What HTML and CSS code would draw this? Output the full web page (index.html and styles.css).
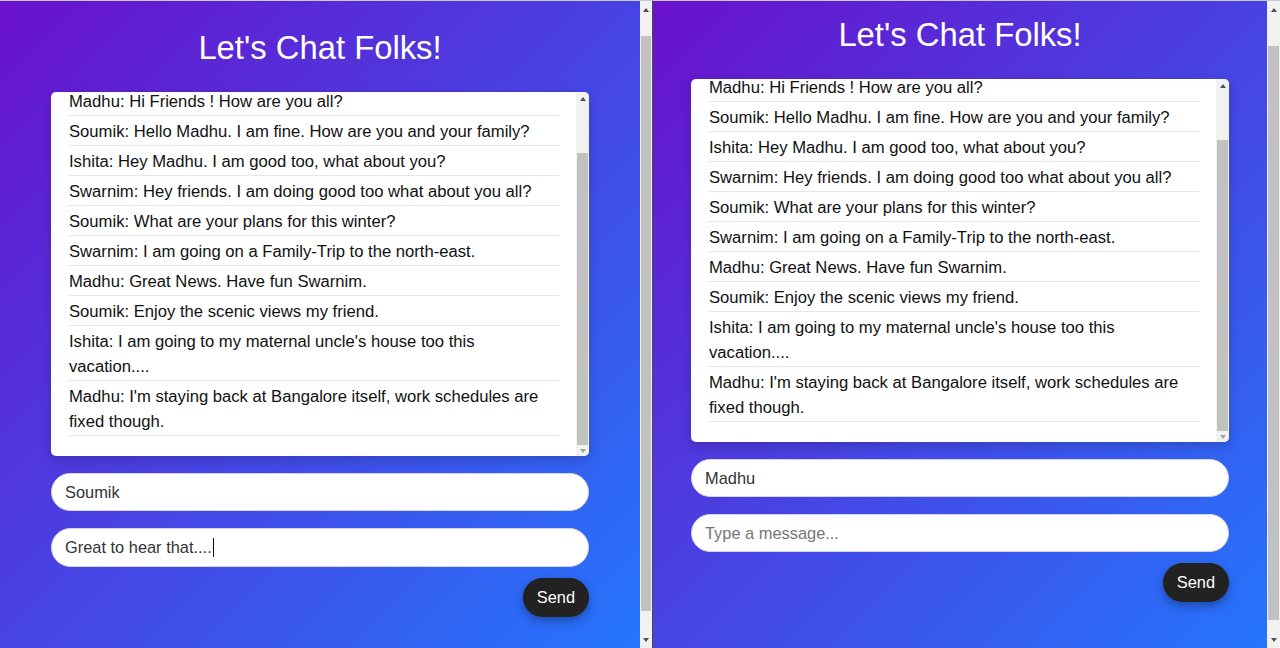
FILE: index.html
```html
<!DOCTYPE html>
<html lang="en">
<head>
<meta charset="utf-8">
<title>Let's Chat Folks!</title>
<link rel="stylesheet" href="styles.css">
</head>
<body>
<div class="desktop">
  <section class="window window-left">
    <div class="viewport">
      <main class="app">
        <h1 class="title">Let's Chat Folks!</h1>
        <div class="chat-box">
          <div class="messages">
            <ul class="message-list">
              <li>Madhu: Hi Friends ! How are you all?</li>
              <li>Soumik: Hello Madhu. I am fine. How are you and your family?</li>
              <li>Ishita: Hey Madhu. I am good too, what about you?</li>
              <li>Swarnim: Hey friends. I am doing good too what about you all?</li>
              <li>Soumik: What are your plans for this winter?</li>
              <li>Swarnim: I am going on a Family-Trip to the north-east.</li>
              <li>Madhu: Great News. Have fun Swarnim.</li>
              <li>Soumik: Enjoy the scenic views my friend.</li>
              <li>Ishita: I am going to my maternal uncle's house too this vacation....</li>
              <li>Madhu: I'm staying back at Bangalore itself, work schedules are fixed though.</li>
            </ul>
          </div>
          <div class="scrollbar scrollbar-inner">
            <div class="sb-btn sb-up-sm"><span class="arrow-up"></span></div>
            <div class="sb-track"><div class="sb-thumb thumb-chat"></div></div>
            <div class="sb-btn sb-down-sm"><span class="arrow-down arrow-dim"></span></div>
          </div>
        </div>
        <div class="field">Soumik</div>
        <div class="field field-tall">Great to hear that....<span class="caret"></span></div>
        <div class="actions"><button class="send-btn" type="button">Send</button></div>
      </main>
    </div>
    <div class="scrollbar scrollbar-page">
      <div class="sb-btn sb-page-btn"><span class="arrow-up"></span></div>
      <div class="sb-track"><div class="sb-thumb thumb-page-left"></div></div>
      <div class="sb-btn sb-page-btn"><span class="arrow-down"></span></div>
    </div>
  </section>

  <section class="window window-right">
    <div class="viewport">
      <main class="app app-scrolled">
        <h1 class="title">Let's Chat Folks!</h1>
        <div class="chat-box">
          <div class="messages">
            <ul class="message-list">
              <li>Madhu: Hi Friends ! How are you all?</li>
              <li>Soumik: Hello Madhu. I am fine. How are you and your family?</li>
              <li>Ishita: Hey Madhu. I am good too, what about you?</li>
              <li>Swarnim: Hey friends. I am doing good too what about you all?</li>
              <li>Soumik: What are your plans for this winter?</li>
              <li>Swarnim: I am going on a Family-Trip to the north-east.</li>
              <li>Madhu: Great News. Have fun Swarnim.</li>
              <li>Soumik: Enjoy the scenic views my friend.</li>
              <li>Ishita: I am going to my maternal uncle's house too this vacation....</li>
              <li>Madhu: I'm staying back at Bangalore itself, work schedules are fixed though.</li>
            </ul>
          </div>
          <div class="scrollbar scrollbar-inner">
            <div class="sb-btn sb-up-sm"><span class="arrow-up"></span></div>
            <div class="sb-track"><div class="sb-thumb thumb-chat"></div></div>
            <div class="sb-btn sb-down-sm"><span class="arrow-down arrow-dim"></span></div>
          </div>
        </div>
        <div class="field">Madhu</div>
        <div class="field placeholder">Type a message...</div>
        <div class="actions"><button class="send-btn" type="button">Send</button></div>
      </main>
    </div>
    <div class="scrollbar scrollbar-page scrollbar-page-wide">
      <div class="sb-btn sb-page-btn"><span class="arrow-up"></span></div>
      <div class="sb-track"><div class="sb-thumb thumb-page-right"></div></div>
      <div class="sb-btn sb-page-btn"><span class="arrow-down"></span></div>
    </div>
  </section>
</div>
</body>
</html>
```

FILE: styles.css
```css
* {
  box-sizing: border-box;
}

html, body {
  margin: 0;
  padding: 0;
  height: 100%;
  overflow: hidden;
}

body {
  font-family: "Liberation Sans", Arial, sans-serif;
  background: #dcdcdc;
}

.desktop {
  display: flex;
  width: 1280px;
  height: 648px;
}

.window {
  display: flex;
  height: 648px;
  border-top: 1px solid #c9c9d6;
}

.window-left {
  width: 653px;
  border-right: 1px solid #4a4a4a;
}

.window-right {
  width: 627px;
}

.viewport {
  flex: 1;
  overflow: hidden;
  background: linear-gradient(135deg, #6a11cb 0%, #2575fc 100%);
}

.app {
  width: 538px;
  margin: 0 auto;
  padding-top: 28px;
}

.app-scrolled {
  margin-top: -13px;
}

.title {
  margin: 0 0 26px;
  font-size: 32.8px;
  line-height: 37px;
  font-weight: normal;
  color: #ffffff;
  text-align: center;
}

.chat-box {
  display: flex;
  height: 364px;
  background: #ffffff;
  border-radius: 5px;
  overflow: hidden;
  box-shadow: 0 4px 12px rgba(0, 0, 0, 0.18);
}

.app-scrolled .chat-box {
  margin-top: 1px;
  height: 363px;
}

.messages {
  flex: 1;
  display: flex;
  flex-direction: column;
  justify-content: flex-end;
  overflow: hidden;
  padding: 0 17px 20px 18px;
}

.message-list {
  flex-shrink: 0;
  list-style: none;
  margin: 0;
  padding: 0;
}

.message-list li {
  font-size: 16.65px;
  line-height: 25px;
  color: #111111;
  padding: 3px 0 1px;
  border-bottom: 1px solid #e6e6e6;
}

/* fake classic scrollbars */
.scrollbar {
  display: flex;
  flex-direction: column;
  flex-shrink: 0;
  background: #f1f1f1;
}

.scrollbar-inner {
  width: 13px;
}

.scrollbar-page {
  width: 12px;
}

.scrollbar-page-wide {
  width: 13px;
}

.sb-btn {
  display: flex;
  align-items: center;
  justify-content: center;
  flex-shrink: 0;
}

.sb-up-sm {
  height: 13px;
}

.sb-down-sm {
  height: 11px;
}

.sb-page-btn {
  height: 17px;
}

.sb-track {
  flex: 1;
  overflow: hidden;
}

.sb-thumb {
  margin: 0 1px;
  background: #c1c1c1;
}

.thumb-chat {
  margin-top: 48px;
  height: 292px;
}

.thumb-page-left {
  margin-top: 18px;
  height: 575px;
}

.thumb-page-right {
  margin-top: 28px;
  height: 574px;
}

.arrow-up,
.arrow-down {
  width: 0;
  height: 0;
  border-left: 3.5px solid transparent;
  border-right: 3.5px solid transparent;
}

.arrow-up {
  border-bottom: 4px solid #505050;
}

.arrow-down {
  border-top: 4px solid #505050;
}

.arrow-dim {
  border-top-color: #a3a3a3;
}

/* inputs */
.field {
  display: flex;
  align-items: center;
  height: 38px;
  margin-top: 17px;
  padding: 0 13px;
  background: #ffffff;
  border: 1px solid #d4d4e4;
  border-radius: 19px;
  font-size: 16.4px;
  color: #333333;
}

.field-tall {
  height: 39px;
  border-radius: 19.5px;
}

.placeholder {
  color: #757575;
}

.caret {
  display: inline-block;
  width: 1px;
  height: 19px;
  margin-left: 1px;
  background: #111111;
}

.actions {
  display: flex;
  justify-content: flex-end;
  margin-top: 11px;
}

.send-btn {
  height: 39px;
  padding: 0 14px;
  border: none;
  border-radius: 20px;
  background: #222222;
  color: #ffffff;
  font-family: "Liberation Sans", Arial, sans-serif;
  font-size: 16.4px;
  line-height: 19px;
  box-shadow: 0 4px 10px rgba(0, 0, 0, 0.3);
  cursor: pointer;
}
```
